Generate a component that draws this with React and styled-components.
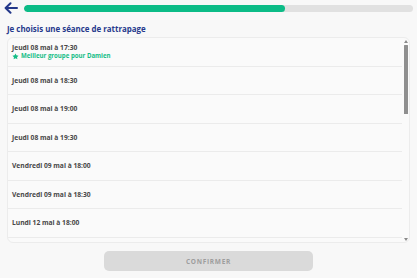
import React from "react";
import styled, { createGlobalStyle } from "styled-components";

const GlobalStyle = createGlobalStyle`
  html, body {
    margin: 0;
    padding: 0;
    background: #f8f8f8;
    font-family: "Open Sans", "Noto Sans", sans-serif;
  }
`;

const Page = styled.div`
  width: 417px;
  height: 278px;
  display: flex;
  flex-direction: column;
  box-sizing: border-box;
  overflow: hidden;
`;

const Header = styled.div`
  display: flex;
  align-items: center;
  gap: 6px;
  padding: 1px 4px 0 4px;
  height: 14px;
`;

const BackButton = styled.button`
  border: 0;
  background: none;
  padding: 0;
  width: 14px;
  height: 14px;
  display: flex;
  align-items: center;
  justify-content: center;
  color: #24388a;
  cursor: pointer;
`;

const Progress = styled.div`
  flex: 1;
  height: 7px;
  border-radius: 4px;
  background: #e1e1e1;
  overflow: hidden;
`;

const ProgressFill = styled.div`
  height: 100%;
  border-radius: 4px;
  background: #0cbc87;
`;

const Title = styled.h1`
  margin: 8px 0 0 7px;
  font-size: 7.9px;
  font-weight: 700;
  color: #26398c;
  line-height: 12px;
`;

const ListBox = styled.div`
  margin: 2px 7px 0 7px;
  height: 204px;
  border: 1px solid #ececec;
  border-radius: 6px;
  background: #fafafa;
  display: flex;
  overflow: hidden;
`;

const Rows = styled.div`
  flex: 1;
  display: flex;
  flex-direction: column;
`;

const Row = styled.div`
  flex: none;
  height: 28.5px;
  box-sizing: border-box;
  border-bottom: 1px solid #ebebeb;
  padding: 0 4px;
  display: flex;
  flex-direction: column;
  justify-content: center;
`;

const Slot = styled.span`
  font-size: 6.7px;
  font-weight: 700;
  color: #474747;
  line-height: 9px;
`;

const Badge = styled.span`
  display: flex;
  align-items: center;
  gap: 2px;
  font-size: 6.1px;
  font-weight: 700;
  color: #14bd86;
  line-height: 8px;
`;

const ScrollTrack = styled.div`
  width: 7px;
  display: flex;
  flex-direction: column;
  align-items: center;
  padding: 2px 0 1px 0;
  gap: 2px;
`;

const Arrow = styled.div`
  width: 0;
  height: 0;
  border-left: 2.5px solid transparent;
  border-right: 2.5px solid transparent;
  ${(p) =>
    p.$up
      ? "border-bottom: 3px solid #8a8a8a;"
      : "border-top: 3px solid #8a8a8a;"}
`;

const ThumbArea = styled.div`
  flex: 1;
  width: 100%;
  display: flex;
  justify-content: center;
`;

const Thumb = styled.div`
  width: 4px;
  height: 69px;
  background: #8f8f8f;
  border-radius: 0.5px;
`;

const Footer = styled.div`
  display: flex;
  justify-content: center;
  padding-top: 8px;
`;

const ConfirmButton = styled.button`
  width: 209px;
  height: 20px;
  border: 0;
  border-radius: 5px;
  background: #dadada;
  color: #9d9d9d;
  font-family: "Open Sans", "Noto Sans", sans-serif;
  font-size: 6.5px;
  font-weight: 700;
  letter-spacing: 0.7px;
  padding: 0;
`;

const slots = [
  "Jeudi 08 mai à 18:30",
  "Jeudi 08 mai à 19:00",
  "Jeudi 08 mai à 19:30",
  "Vendredi 09 mai à 18:00",
  "Vendredi 09 mai à 18:30",
  "Lundi 12 mai à 18:00",
];

export default function App() {
  return (
    <Page>
      <GlobalStyle />
      <Header>
        <BackButton aria-label="Retour">
          <svg width="14" height="12" viewBox="0 0 14 12" fill="none">
            <path
              d="M13 6H1.8M6.5 1.2L1.6 6l4.9 4.8"
              stroke="currentColor"
              strokeWidth="2"
              strokeLinecap="round"
              strokeLinejoin="round"
            />
          </svg>
        </BackButton>
        <Progress>
          <ProgressFill style={{ width: "67%" }} />
        </Progress>
      </Header>
      <Title>Je choisis une séance de rattrapage</Title>
      <ListBox>
        <Rows>
          <Row>
            <Slot>Jeudi 08 mai à 17:30</Slot>
            <Badge>
              <svg width="7" height="7" viewBox="0 0 24 24">
                <path
                  d="M12 1.5l3.2 6.6 7.3 1-5.3 5.1 1.3 7.3L12 18l-6.5 3.5 1.3-7.3L1.5 9.1l7.3-1z"
                  fill="currentColor"
                />
              </svg>
              Meilleur groupe pour Damien
            </Badge>
          </Row>
          {slots.map((s) => (
            <Row key={s}>
              <Slot>{s}</Slot>
            </Row>
          ))}
        </Rows>
        <ScrollTrack>
          <Arrow $up />
          <ThumbArea>
            <Thumb />
          </ThumbArea>
          <Arrow />
        </ScrollTrack>
      </ListBox>
      <Footer>
        <ConfirmButton disabled>CONFIRMER</ConfirmButton>
      </Footer>
    </Page>
  );
}
